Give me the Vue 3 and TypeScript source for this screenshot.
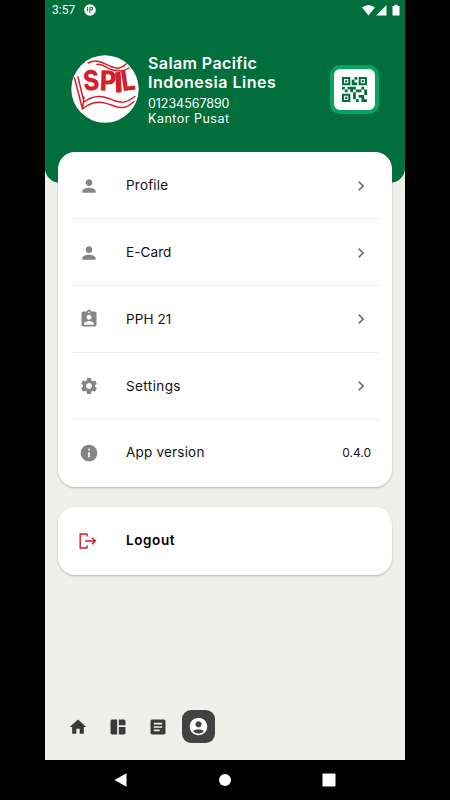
<script setup lang="ts">
interface MenuItem {
  label: string
  icon: string
  key: string
  value?: string
}

const person = 'M12 12c2.21 0 4-1.79 4-4s-1.79-4-4-4-4 1.79-4 4 1.79 4 4 4zm0 2c-2.67 0-8 1.34-8 4v2h16v-2c0-2.66-5.33-4-8-4z'

const items: MenuItem[] = [
  { key: 'profile', label: 'Profile', icon: person },
  { key: 'ecard', label: 'E-Card', icon: person },
  {
    key: 'pph',
    label: 'PPH 21',
    icon: 'M19 3h-4.18C14.4 1.84 13.3 1 12 1s-2.4.84-2.82 2H5c-1.1 0-2 .9-2 2v14c0 1.1.9 2 2 2h14c1.1 0 2-.9 2-2V5c0-1.1-.9-2-2-2zm-7 0c.55 0 1 .45 1 1s-.45 1-1 1-1-.45-1-1 .45-1 1-1zm0 4c1.66 0 3 1.34 3 3s-1.34 3-3 3-3-1.34-3-3 1.34-3 3-3zm6 12H6v-1.4c0-2 4-3.1 6-3.1s6 1.1 6 3.1V19z',
  },
  {
    key: 'settings',
    label: 'Settings',
    icon: 'M19.14 12.94c.04-.3.06-.61.06-.94 0-.32-.02-.64-.07-.94l2.03-1.58c.18-.14.23-.41.12-.61l-1.92-3.32c-.12-.22-.37-.29-.59-.22l-2.39.96c-.5-.38-1.03-.7-1.62-.94l-.36-2.54c-.04-.24-.24-.41-.48-.41h-3.84c-.24 0-.43.17-.47.41l-.36 2.54c-.59.24-1.13.57-1.62.94l-2.39-.96c-.22-.08-.47 0-.59.22L2.74 8.87c-.12.21-.08.47.12.61l2.03 1.58c-.05.3-.09.63-.09.94s.02.64.07.94l-2.03 1.58c-.18.14-.23.41-.12.61l1.92 3.32c.12.22.37.29.59.22l2.39-.96c.5.38 1.03.7 1.62.94l.36 2.54c.05.24.24.41.48.41h3.84c.24 0 .44-.17.47-.41l.36-2.54c.59-.24 1.13-.56 1.62-.94l2.39.96c.22.08.47 0 .59-.22l1.92-3.32c.12-.22.07-.47-.12-.61l-2.01-1.58zM12 15.6c-1.98 0-3.6-1.62-3.6-3.6s1.62-3.6 3.6-3.6 3.6 1.62 3.6 3.6-1.62 3.6-3.6 3.6z',
  },
  {
    key: 'version',
    label: 'App version',
    icon: 'M12 2C6.48 2 2 6.48 2 12s4.48 10 10 10 10-4.48 10-10S17.52 2 12 2zm1 15h-2v-6h2v6zm0-8h-2V7h2v2z',
    value: '0.4.0',
  },
]

const tabs = [
  { name: 'home', icon: 'M10 20v-6h4v6h5v-8h3L12 3 2 12h3v8z' },
  { name: 'dashboard', icon: 'M11 21H5c-1.1 0-2-.9-2-2V5c0-1.1.9-2 2-2h6v18zm2 0h6c1.1 0 2-.9 2-2v-7h-8v9zm8-11V5c0-1.1-.9-2-2-2h-6v7h8z' },
  { name: 'article', icon: 'M19 3H5c-1.1 0-2 .9-2 2v14c0 1.1.9 2 2 2h14c1.1 0 2-.9 2-2V5c0-1.1-.9-2-2-2zm-5 14H7v-2h7v2zm3-4H7v-2h10v2zm0-4H7V7h10v2z' },
  { name: 'account', icon: 'M12 2C6.48 2 2 6.48 2 12s4.48 10 10 10 10-4.48 10-10S17.52 2 12 2zm0 4c1.93 0 3.5 1.57 3.5 3.5S13.93 13 12 13s-3.5-1.57-3.5-3.5S10.07 6 12 6zm0 14c-2.03 0-4.43-.82-6.14-2.88C7.55 15.8 9.68 15 12 15s4.45.8 6.14 2.12C16.43 19.18 14.03 20 12 20z' },
]

const qrPath = 'M15 21h-2v-2h2v2zm-2-7h-2v5h2v-5zm8-2h-2v4h2v-4zm-2-2h-2v2h2v-2zM7 12H5v2h2v-2zm-2-2H3v2h2v-2zm7-5h2V3h-2v2zm-7.5-.5v3h3v-3h-3zM9 9H3V3h6v6zm-4.5 7.5v3h3v-3h-3zM9 21H3v-6h6v6zm7.5-16.5v3h3v-3h-3zM21 9h-6V3h6v6zm-2 10v-3h-4v2h2v3h4v-2h-2zm-2-7h-4v2h4v-2zm-4-2H7v2h2v2h2v-2h2v-2zm1-1V7h-2V5h-2v4h4zM6.75 5.25h-1.5v1.5h1.5v-1.5zm0 12h-1.5v1.5h1.5v-1.5zm12-12h-1.5v1.5h1.5v-1.5z'
</script>

<template>
  <div class="device">
    <div class="screen">
      <header class="header">
        <div class="status">
          <span class="clock">3:57</span>
          <svg class="notice" viewBox="0 0 12 12">
            <circle cx="6" cy="6" r="5.8" fill="#fff" />
            <path d="M3.6 2.8v4.4M5.9 9.2V3.3h2.7v2.5H5.9" fill="none" stroke="#006f3c" stroke-width="1" />
          </svg>
          <svg class="signals" viewBox="0 0 38 12">
            <path d="M0 3.5Q6.5-1.5 13 3.5L6.5 11.5zM14 11.5 24.5 1v10.5zM30.5 2h2V.8h3V2h2v9.5h-7z" fill="#fff" />
          </svg>
        </div>
        <div class="identity">
          <svg class="logo" viewBox="0 0 68 68">
            <circle cx="34" cy="34" r="33.7" fill="#fff" />
            <g fill="none" stroke="#d51f2b" stroke-width="1.5" stroke-linecap="round">
              <path d="M17 8C27 3 33 9 40 11.5S50 14 55 9M26 9.5C32 8 36 14 42 15S52 17 58 13" />
              <path d="M3.5 23 11.5 54M7 22 12 43M11.5 54C24 43 35 48 43 51S56 53 63 46.5M12.5 47.5C24 38 34 42 43 45.5S56 47 64 41.5M11.5 54 13 42" />
            </g>
            <g class="logo-letters">
              <text x="13" y="36" textLength="16" lengthAdjust="spacingAndGlyphs" transform="rotate(-5 14 36)">S</text>
              <text x="28.5" y="35.5" textLength="16.5" lengthAdjust="spacingAndGlyphs" transform="rotate(2 30 35)">P</text>
              <text x="43.5" y="37.5" textLength="9" lengthAdjust="spacingAndGlyphs" transform="rotate(-3 47 37)">I</text>
              <text x="51.5" y="36" textLength="14" lengthAdjust="spacingAndGlyphs" transform="rotate(-8 53 36)">L</text>
            </g>
          </svg>
          <div class="details">
            <div class="company"><span class="line-a">Salam Pacific</span><br><span class="line-b">Indonesia Lines</span></div>
            <div class="account"><span class="number">01234567890</span><br><span class="office">Kantor Pusat</span></div>
          </div>
          <div class="qr">
            <svg viewBox="3 3 18 18"><path :d="qrPath" fill="#006f3c" /></svg>
          </div>
        </div>
      </header>

      <main class="content">
        <section class="card menu">
          <div v-for="item in items" :key="item.key" class="row">
            <svg class="icon" viewBox="0 0 24 24"><path :d="item.icon" fill-rule="evenodd" /></svg>
            <span class="label" :class="item.key">{{ item.label }}</span>
            <span v-if="item.value" class="value">{{ item.value }}</span>
            <svg v-else class="chevron" viewBox="0 0 24 24"><path d="M10 6 8.59 7.41 13.17 12l-4.58 4.59L10 18l6-6z" /></svg>
          </div>
        </section>
        <section class="card logout">
          <svg class="exit" viewBox="0 0 18 16">
            <path d="M8.2 1H1.2v14h7M6 8h10.3M13 4.7 16.3 8 13 11.3M8.2 1v2.6M8.2 15v-2.6" />
          </svg>
          <span class="label strong">Logout</span>
        </section>
      </main>

      <nav class="tabs">
        <div v-for="tab in tabs" :key="tab.name" class="tab" :class="{ active: tab.name === 'account' }">
          <svg viewBox="0 0 24 24"><path :d="tab.icon" /></svg>
        </div>
      </nav>
    </div>
    <div class="system-nav">
      <svg viewBox="0 0 14 14"><path d="M.5 7 12.5.2v13.6z" /></svg>
      <svg viewBox="0 0 14 14"><circle cx="7" cy="7" r="6" /></svg>
      <svg viewBox="0 0 14 14"><rect x=".5" y=".5" width="13" height="13" rx="1" /></svg>
    </div>
  </div>
</template>

<style>
body { margin: 0; background: #000; }
</style>

<style scoped>
.device {
  width: 450px;
  height: 800px;
  display: flex;
  flex-direction: column;
  align-items: center;
  background: #000;
  font-family: Inter, "Open Sans", sans-serif;
}
.screen {
  width: 360px;
  height: 760px;
  display: flex;
  flex-direction: column;
  background: #eff0eb;
}
.header {
  height: 183px;
  flex: none;
  border-radius: 0 0 15px 15px;
  background: #006f3c;
  color: #fff;
}
.status {
  height: 20px;
  display: flex;
  align-items: center;
  padding: 0 5px 0 7px;
}
.clock { width: 32px; font: 400 12px/20px Roboto, sans-serif; }
.notice { width: 12px; height: 12px; }
.signals { width: 38px; height: 12px; margin-left: auto; }
.identity {
  display: flex;
  align-items: center;
  height: 72px;
  padding: 33px 26px 0 26px;
}
.logo { width: 68px; height: 68px; flex: none; }
.logo-letters { fill: #d51f2b; font: 800 28px Inter, sans-serif; }
.details { margin-left: 9px; padding-top: 1px; flex: 1; white-space: nowrap; }
.company { font-size: 16px; font-weight: 600; line-height: 19.5px; }
.line-a { letter-spacing: 0.4px; }
.line-b { letter-spacing: 0.5px; }
.account { margin-top: 3px; font-size: 12.5px; line-height: 15px; }
.number { letter-spacing: -0.05px; }
.office { letter-spacing: 0.5px; }
.qr {
  box-sizing: border-box;
  width: 49px;
  height: 49px;
  display: grid;
  place-items: center;
  border: 4px solid #06a45c;
  border-radius: 10px;
  background: #fff;
}
.qr svg { width: 25px; height: 25px; }
.content {
  display: flex;
  flex-direction: column;
  gap: 20px;
  margin-top: -31px;
  padding: 0 13px;
}
.card {
  border-radius: 17px;
  background: #fff;
  box-shadow: 0 1px 2px rgba(45, 75, 55, 0.32);
}
.menu {
  box-sizing: border-box;
  height: 335px;
  display: grid;
  grid-template-rows: repeat(5, 66.75px);
  padding: 0.5px 14px 0;
}
.row {
  display: flex;
  align-items: center;
  padding: 0 7px;
}
.row + .row { box-shadow: 0 -1px #eeefed; }
.icon { width: 20px; height: 20px; fill: #858585; }
.label { margin-left: 27px; padding-bottom: 1px; color: #111; font-size: 13.5px; font-weight: 400; letter-spacing: 0.3px; }
.profile { letter-spacing: 0.2px; }
.ecard { letter-spacing: 0.1px; }
.pph { letter-spacing: 0.1px; }
.settings { letter-spacing: 0.4px; }
.version { letter-spacing: 0.2px; }
.value { margin-left: auto; color: #151515; font-size: 12px; letter-spacing: 0; }
.chevron { width: 20px; height: 20px; margin-left: auto; fill: #737373; }
.logout { height: 68px; display: flex; align-items: center; padding-left: 21px; }
.exit { width: 18px; height: 16px; margin-right: 2px; fill: none; stroke: #d71925; stroke-width: 1.4; }
.label.strong { padding-bottom: 2px; color: #000; font-weight: 600; letter-spacing: 0.6px; }
.tabs {
  display: flex;
  align-items: center;
  gap: 7px;
  margin-top: auto;
  padding: 0 17px 17px;
}
.tab {
  width: 33px;
  height: 33px;
  display: grid;
  place-items: center;
  border-radius: 9px;
}
.tab svg { width: 20px; height: 20px; margin-right: 1px; fill: #393a39; }
.tab.active { background: #414241; }
.tab.active svg { width: 21px; height: 21px; margin: 0; fill: #fff; }
.system-nav {
  width: 222px;
  height: 40px;
  display: flex;
  align-items: center;
  justify-content: space-between;
}
.system-nav svg { width: 14px; height: 14px; fill: #fff; }
</style>
